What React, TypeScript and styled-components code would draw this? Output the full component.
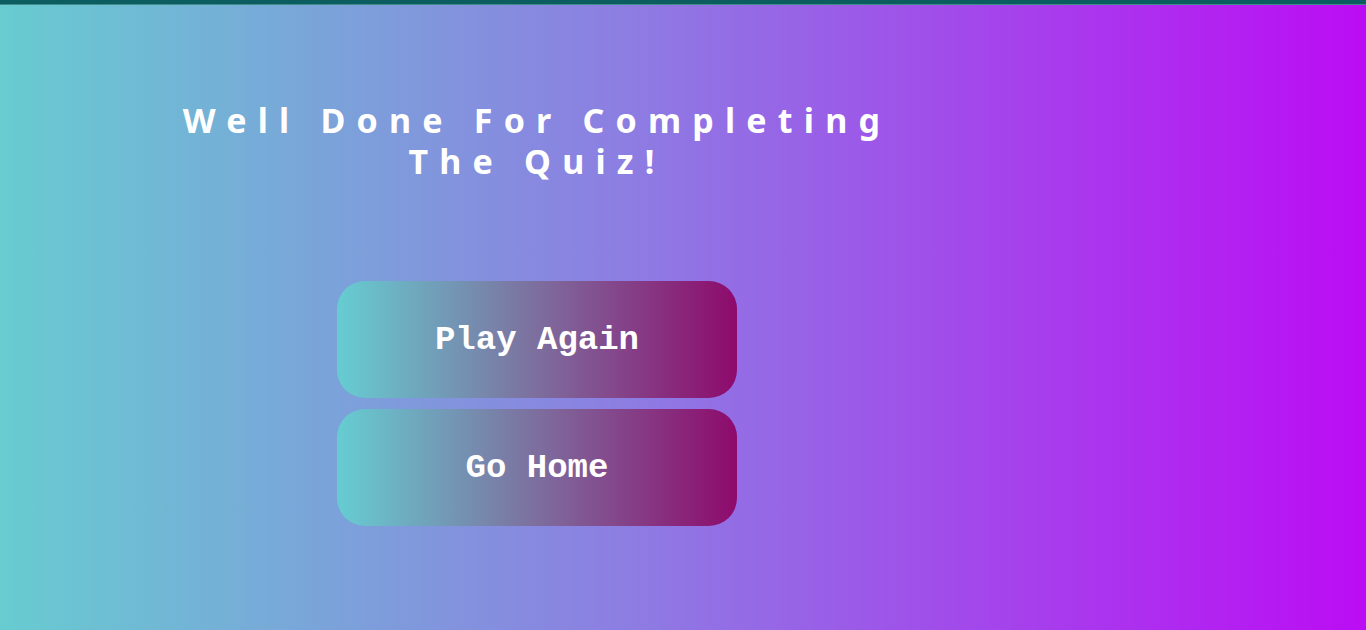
import React from "react";
import styled, { createGlobalStyle } from "styled-components";

const Global = createGlobalStyle`
  html, body { margin: 0; padding: 0; }
  body {
    min-height: 630px;
    background: linear-gradient(to right, #67ccd0 0%, #8c7fe2 45%, #bb0cf4 100%);
    font-family: "Noto Sans", "DejaVu Sans", sans-serif;
  }
`;

const Page = styled.div`
  min-height: 630px;
  display: flex;
  flex-direction: column;
`;

const TopBar = styled.div`
  height: 4px;
  background: #0b5d60;
  border-bottom: 1px solid #3f8c8a;
`;

const Column = styled.main`
  width: 1074px;
  display: flex;
  flex-direction: column;
  align-items: center;
`;

const Title = styled.h1`
  width: 760px;
  margin: 95px 0 0;
  color: #ffffff;
  font-family: "Noto Sans", "DejaVu Sans", sans-serif;
  font-weight: 700;
  font-size: 34px;
  line-height: 41px;
  letter-spacing: 11.2px;
  text-align: center;
`;

const Buttons = styled.div`
  margin-top: 99px;
  display: flex;
  flex-direction: column;
  gap: 11px;
`;

const Button = styled.button`
  width: 400px;
  height: 117px;
  border: none;
  border-radius: 28px;
  background: linear-gradient(to right, #66cdd2 0%, #7d6e9e 50%, #8e0a6c 100%);
  color: #ffffff;
  font-family: "Courier New", Courier, "Liberation Mono", monospace;
  font-weight: 700;
  font-size: 34px;
  cursor: pointer;
`;

export default function App() {
  return (
    <Page>
      <Global />
      <TopBar />
      <Column>
        <Title>Well Done For Completing The Quiz!</Title>
        <Buttons>
          <Button>Play Again</Button>
          <Button>Go Home</Button>
        </Buttons>
      </Column>
    </Page>
  );
}
